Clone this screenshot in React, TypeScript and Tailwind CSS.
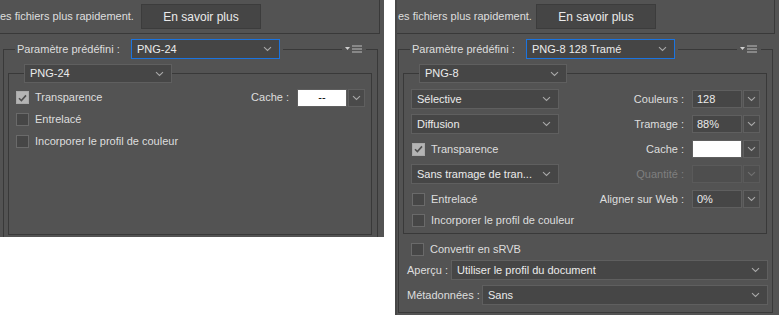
import type { ReactNode } from "react";

const line = "border-[#393939]";

function Chevron({ dim = false }: { dim?: boolean }) {
  return (
    <svg width="9" height="6" viewBox="0 0 9 6" className="shrink-0">
      <path d="M1 1.2l3.5 3.3L8 1.2" fill="none" stroke={dim ? "#707070" : "#a8a8a8"} strokeWidth="1.1" />
    </svg>
  );
}

function Select({ text, w, h = 20, focus = false }: { text: string; w: number; h?: number; focus?: boolean }) {
  return (
    <div
      className={`flex shrink-0 items-center justify-between border pl-[5px] pr-[7px] text-[#ebebeb] ${
        focus ? "border-[#1b74e0] bg-[#454545]" : "border-[#5f5f5f] bg-[#464646]"
      }`}
      style={{ width: w, height: h }}
    >
      <span className="whitespace-nowrap">{text}</span>
      <Chevron />
    </div>
  );
}

function Combo({ value, white = false, disabled = false }: { value?: string; white?: boolean; disabled?: boolean }) {
  const field = white
    ? "bg-white border-[#5f5f5f] text-black justify-center"
    : disabled
      ? "bg-[#4e4e4e] border-[#5a5a5a]"
      : "bg-[#464646] border-[#5f5f5f] text-[#ebebeb] pl-[4px]";
  return (
    <div className="flex h-[18px] shrink-0">
      <div className={`flex w-[50px] items-center border ${field}`}>{value}</div>
      <div
        className={`ml-[1px] flex w-[17px] items-center justify-center border ${
          disabled ? "border-[#5a5a5a] bg-[#4e4e4e]" : "border-[#5f5f5f] bg-[#4a4a4a]"
        }`}
      >
        <Chevron dim={disabled} />
      </div>
    </div>
  );
}

function Checkbox({ checked = false }: { checked?: boolean }) {
  return (
    <div
      className={`flex h-[13px] w-[13px] shrink-0 items-center justify-center border ${
        checked ? "border-[#a9a9a9] bg-[#b4b4b4]" : "border-[#6a6a6a] bg-[#464646]"
      }`}
    >
      {checked && (
        <svg width="9" height="8" viewBox="0 0 9 8">
          <path d="M1 4.2l2.4 2.4L8 1.4" fill="none" stroke="#4f4f4f" strokeWidth="1.6" />
        </svg>
      )}
    </div>
  );
}

function Check({ label, checked }: { label: string; checked?: boolean }) {
  return (
    <div className="flex items-center gap-[6px]">
      <Checkbox checked={checked} />
      <span className="whitespace-nowrap">{label}</span>
    </div>
  );
}

function Field({ label, children, dim = false }: { label: string; children: ReactNode; dim?: boolean }) {
  return (
    <div className="ml-auto flex items-center gap-[8px]">
      <span className={`whitespace-nowrap ${dim ? "text-[#7f7f7f]" : ""}`}>{label}</span>
      {children}
    </div>
  );
}

function MenuIcon() {
  return (
    <svg width="18" height="8" viewBox="0 0 18 8" className="mx-[3px] shrink-0 self-center">
      <path d="M0 2h5L2.5 5z" fill="#cfcfcf" />
      <path d="M7 1h10M7 4h10M7 7h10" stroke="#bdbdbd" strokeWidth="1.2" />
    </svg>
  );
}

function Panel({ preset, format, textLeft, height, edge = false, children, after }: {
  preset: string;
  format: string;
  textLeft: number;
  height: number;
  edge?: boolean;
  children: ReactNode;
  after?: ReactNode;
}) {
  return (
    <div
      className={`w-[384px] shrink-0 overflow-hidden bg-[#535353] ${edge ? "border-l-2 border-[#474747]" : ""}`}
      style={{ height }}
    >
      <div className={`flex h-[34px] items-center border-r border-b ${line}`} style={{ width: edge ? 378 : 380 }}>
        <span className="whitespace-nowrap" style={{ marginLeft: textLeft }}>es fichiers plus rapidement.</span>
        <div className="ml-auto mr-[118px] flex h-[25px] w-[120px] items-center justify-center border border-[#3c3c3c] bg-[#454545] text-[12px] text-[#ebebeb]">
          En savoir plus
        </div>
      </div>

      <div className="mt-[5px] w-[375px]" style={{ marginLeft: edge ? 1 : 3 }}>
        <div className="flex h-[20px]">
          <div className={`h-[10px] w-[12px] self-end border-l border-t ${line}`} />
          <span className="ml-[2px] self-center whitespace-nowrap">Paramètre prédéfini :</span>
          <div className="ml-auto">
            <Select text={preset} w={149} focus />
          </div>
          <div className={`ml-[3px] h-[10px] w-[59px] self-end border-t ${line}`} />
          <MenuIcon />
          <div className={`h-[10px] w-[12px] self-end border-t border-r ${line}`} />
        </div>
        <div className={`border-x border-b pl-[4px] pt-[5px] ${line}`} style={{ paddingBottom: 7 }}>
          <div className="w-[364px]">
            <div className="flex h-[19px]">
              <div className={`h-[10px] w-[16px] self-end border-l border-t ${line}`} />
              <Select text={format} w={148} h={19} />
              <div className={`h-[10px] flex-1 self-end border-t border-r ${line}`} />
            </div>
            <div className={`border-x border-b pl-[7px] pr-[6px] pt-[6px] ${line}`}>{children}</div>
          </div>
          {after}
        </div>
      </div>
    </div>
  );
}

export default function App() {
  return (
    <div className="flex h-[315px] w-[779px] items-start gap-[11px] bg-white font-['Liberation_Sans',Arial,sans-serif] text-[11px] text-[#dedede]">
      <Panel preset="PNG-24" format="PNG-24" textLeft={0} height={237}>
        <div className="flex h-[145px] flex-col gap-[5px]">
          <div className="flex h-[17px] items-center">
            <Check label="Transparence" checked />
            <Field label="Cache :">
              <Combo value="--" white />
            </Field>
          </div>
          <div className="flex h-[17px] items-center">
            <Check label="Entrelacé" />
          </div>
          <div className="flex h-[17px] items-center">
            <Check label="Incorporer le profil de couleur" />
          </div>
        </div>
      </Panel>

      <Panel
        preset="PNG-8 128 Tramé"
        format="PNG-8"
        textLeft={1}
        height={315}
        edge
        after={
          <div className="pr-[4px]">
            <div className="ml-[8px] mt-[8px] flex h-[14px] items-center">
              <Check label="Convertir en sRVB" />
            </div>
            <div className="mt-[4px] flex items-center">
              <span className="ml-[4px] whitespace-nowrap">Aperçu :</span>
              <div className="ml-auto">
                <Select text="Utiliser le profil du document" w={317} />
              </div>
            </div>
            <div className="mt-[5px] flex items-center">
              <span className="ml-[4px] whitespace-nowrap">Métadonnées :</span>
              <div className="ml-auto">
                <Select text="Sans" w={286} />
              </div>
            </div>
          </div>
        }
      >
        <div className="flex flex-col gap-[5px] pb-[6px]">
          <div className="flex h-[20px] items-center">
            <Select text="Sélective" w={148} />
            <Field label="Couleurs :">
              <Combo value="128" />
            </Field>
          </div>
          <div className="flex h-[20px] items-center">
            <Select text="Diffusion" w={148} />
            <Field label="Tramage :">
              <Combo value="88%" />
            </Field>
          </div>
          <div className="flex h-[20px] items-center">
            <div className="ml-[1px]">
              <Check label="Transparence" checked />
            </div>
            <Field label="Cache :">
              <Combo white />
            </Field>
          </div>
          <div className="flex h-[20px] items-center">
            <Select text="Sans tramage de tran..." w={148} />
            <Field label="Quantité :" dim>
              <Combo disabled />
            </Field>
          </div>
          <div className="flex h-[20px] items-center">
            <div className="ml-[1px]">
              <Check label="Entrelacé" />
            </div>
            <Field label="Aligner sur Web :">
              <Combo value="0%" />
            </Field>
          </div>
          <div className="flex h-[13px] items-center">
            <div className="ml-[1px]">
              <Check label="Incorporer le profil de couleur" />
            </div>
          </div>
        </div>
      </Panel>
    </div>
  );
}
